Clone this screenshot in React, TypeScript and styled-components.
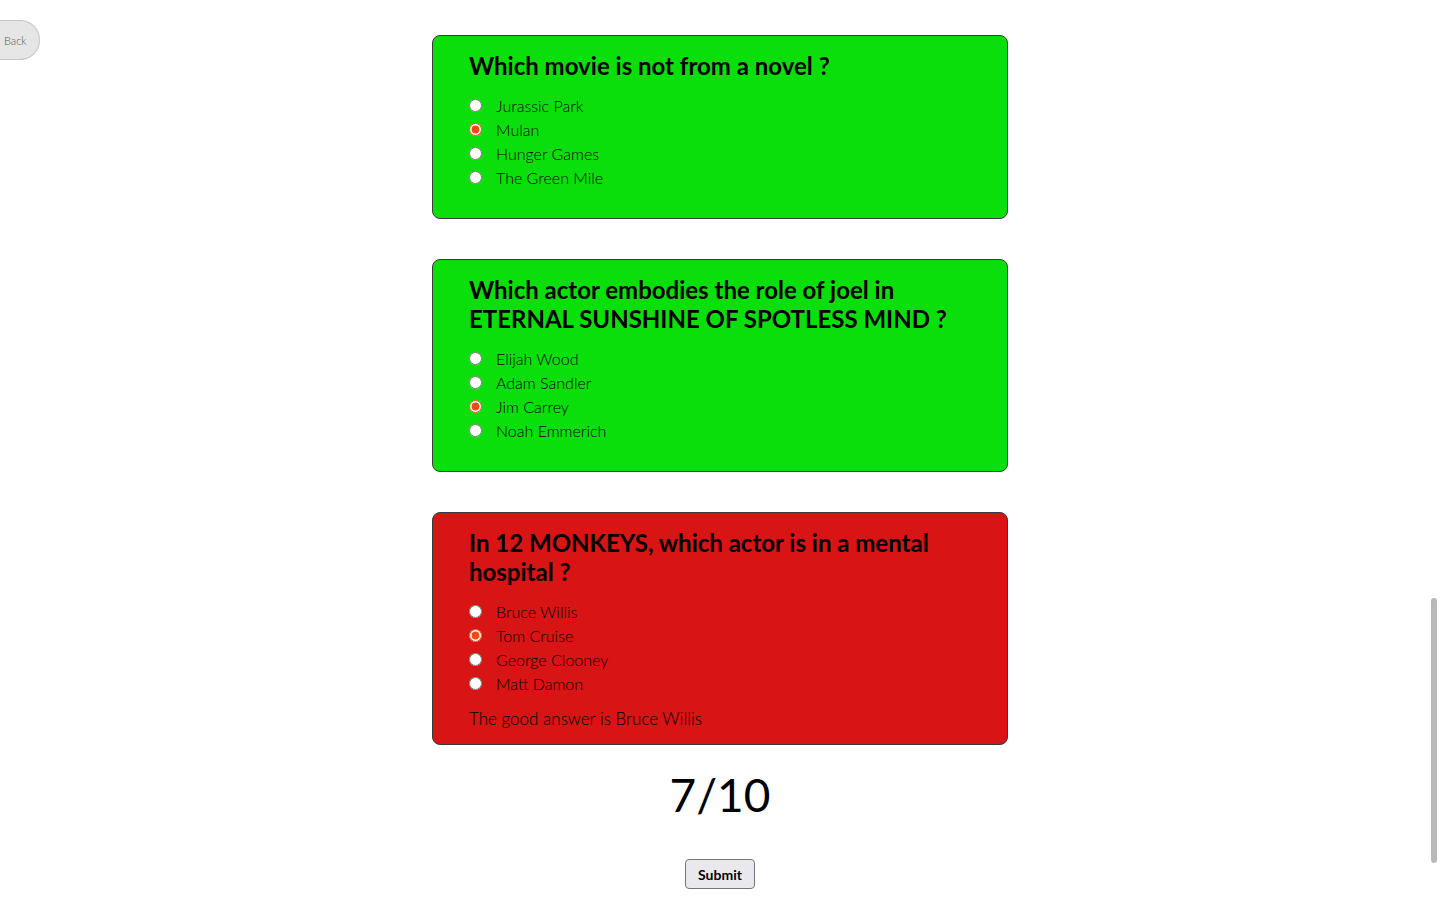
import styled, { createGlobalStyle } from 'styled-components';

const GlobalStyle = createGlobalStyle`
  html, body {
    margin: 0;
    padding: 0;
    overflow: hidden;
    background: #ffffff;
  }
  body {
    font-family: Lato, "Open Sans", sans-serif;
    color: #000;
  }
`;

const Page = styled.main`
  display: flex;
  flex-direction: column;
  align-items: center;
  padding-top: 35px;
`;

const BackButton = styled.button`
  position: fixed;
  top: 20px;
  left: 0;
  width: 40px;
  height: 40px;
  padding: 0 0 0 4px;
  text-align: left;
  border: 1px solid #c4c4c4;
  border-left: none;
  border-radius: 0 20px 20px 0;
  background: #e6e6e6;
  color: #555;
  font-family: Lato, sans-serif;
  font-size: 11px;
  font-weight: 300;
  cursor: pointer;
`;

const ScrollThumb = styled.div`
  position: fixed;
  top: 598px;
  right: 3px;
  width: 6px;
  height: 265px;
  border-radius: 3px;
  background: #b8b8b8;
`;

const QuestionList = styled.div`
  display: flex;
  flex-direction: column;
  gap: 40px;
`;

const Card = styled.section<{ $correct: boolean }>`
  box-sizing: border-box;
  width: 576px;
  padding: 15px 36px 17px;
  border: 1px solid #3a3a3a;
  border-radius: 8px;
  background: ${(p) => (p.$correct ? '#0bdf0b' : '#d91414')};
`;

const Title = styled.h2`
  margin: 0 0 13px;
  font-size: 24px;
  line-height: 29px;
  font-weight: 700;
`;

const Options = styled.div`
  display: flex;
  flex-direction: column;
  padding-bottom: 12px;
`;

const Option = styled.label`
  display: flex;
  align-items: center;
  gap: 14px;
  height: 24px;
  font-size: 16px;
  font-weight: 300;
`;

const Radio = styled.input`
  margin: 1px 0 0;
  width: 13px;
  height: 13px;
  accent-color: #ee4a16;
`;

const Answer = styled.p`
  margin: 1px 0 -3px;
  font-size: 17px;
  line-height: 22px;
  font-weight: 300;
`;

const Score = styled.div`
  margin-top: 20px;
  font-size: 46px;
  line-height: 60px;
  font-weight: 400;
`;

const SubmitButton = styled.button`
  margin-top: 34px;
  width: 70px;
  height: 30px;
  border: 1px solid #767676;
  border-radius: 4px;
  background: #e9e9ed;
  font-family: Lato, sans-serif;
  font-size: 14px;
  font-weight: 700;
  color: #000;
`;

interface Question {
  title: string;
  options: string[];
  selected: number;
  correct: number;
}

const questions: Question[] = [
  {
    title: 'Which movie is not from a novel ?',
    options: ['Jurassic Park', 'Mulan', 'Hunger Games', 'The Green Mile'],
    selected: 1,
    correct: 1,
  },
  {
    title: 'Which actor embodies the role of joel in ETERNAL SUNSHINE OF SPOTLESS MIND ?',
    options: ['Elijah Wood', 'Adam Sandler', 'Jim Carrey', 'Noah Emmerich'],
    selected: 2,
    correct: 2,
  },
  {
    title: 'In 12 MONKEYS, which actor is in a mental hospital ?',
    options: ['Bruce Willis', 'Tom Cruise', 'George Clooney', 'Matt Damon'],
    selected: 1,
    correct: 0,
  },
];

export default function App() {
  return (
    <>
      <GlobalStyle />
      <BackButton>Back</BackButton>
      <Page>
        <QuestionList>
          {questions.map((q, qi) => {
            const ok = q.selected === q.correct;
            return (
              <Card key={qi} $correct={ok}>
                <Title>{q.title}</Title>
                <Options>
                  {q.options.map((opt, oi) => (
                    <Option key={opt}>
                      <Radio type="radio" name={`q${qi}`} defaultChecked={oi === q.selected} />
                      {opt}
                    </Option>
                  ))}
                </Options>
                {!ok && <Answer>The good answer is {q.options[q.correct]}</Answer>}
              </Card>
            );
          })}
        </QuestionList>
        <Score>7/10</Score>
        <SubmitButton>Submit</SubmitButton>
      </Page>
      <ScrollThumb />
    </>
  );
}
